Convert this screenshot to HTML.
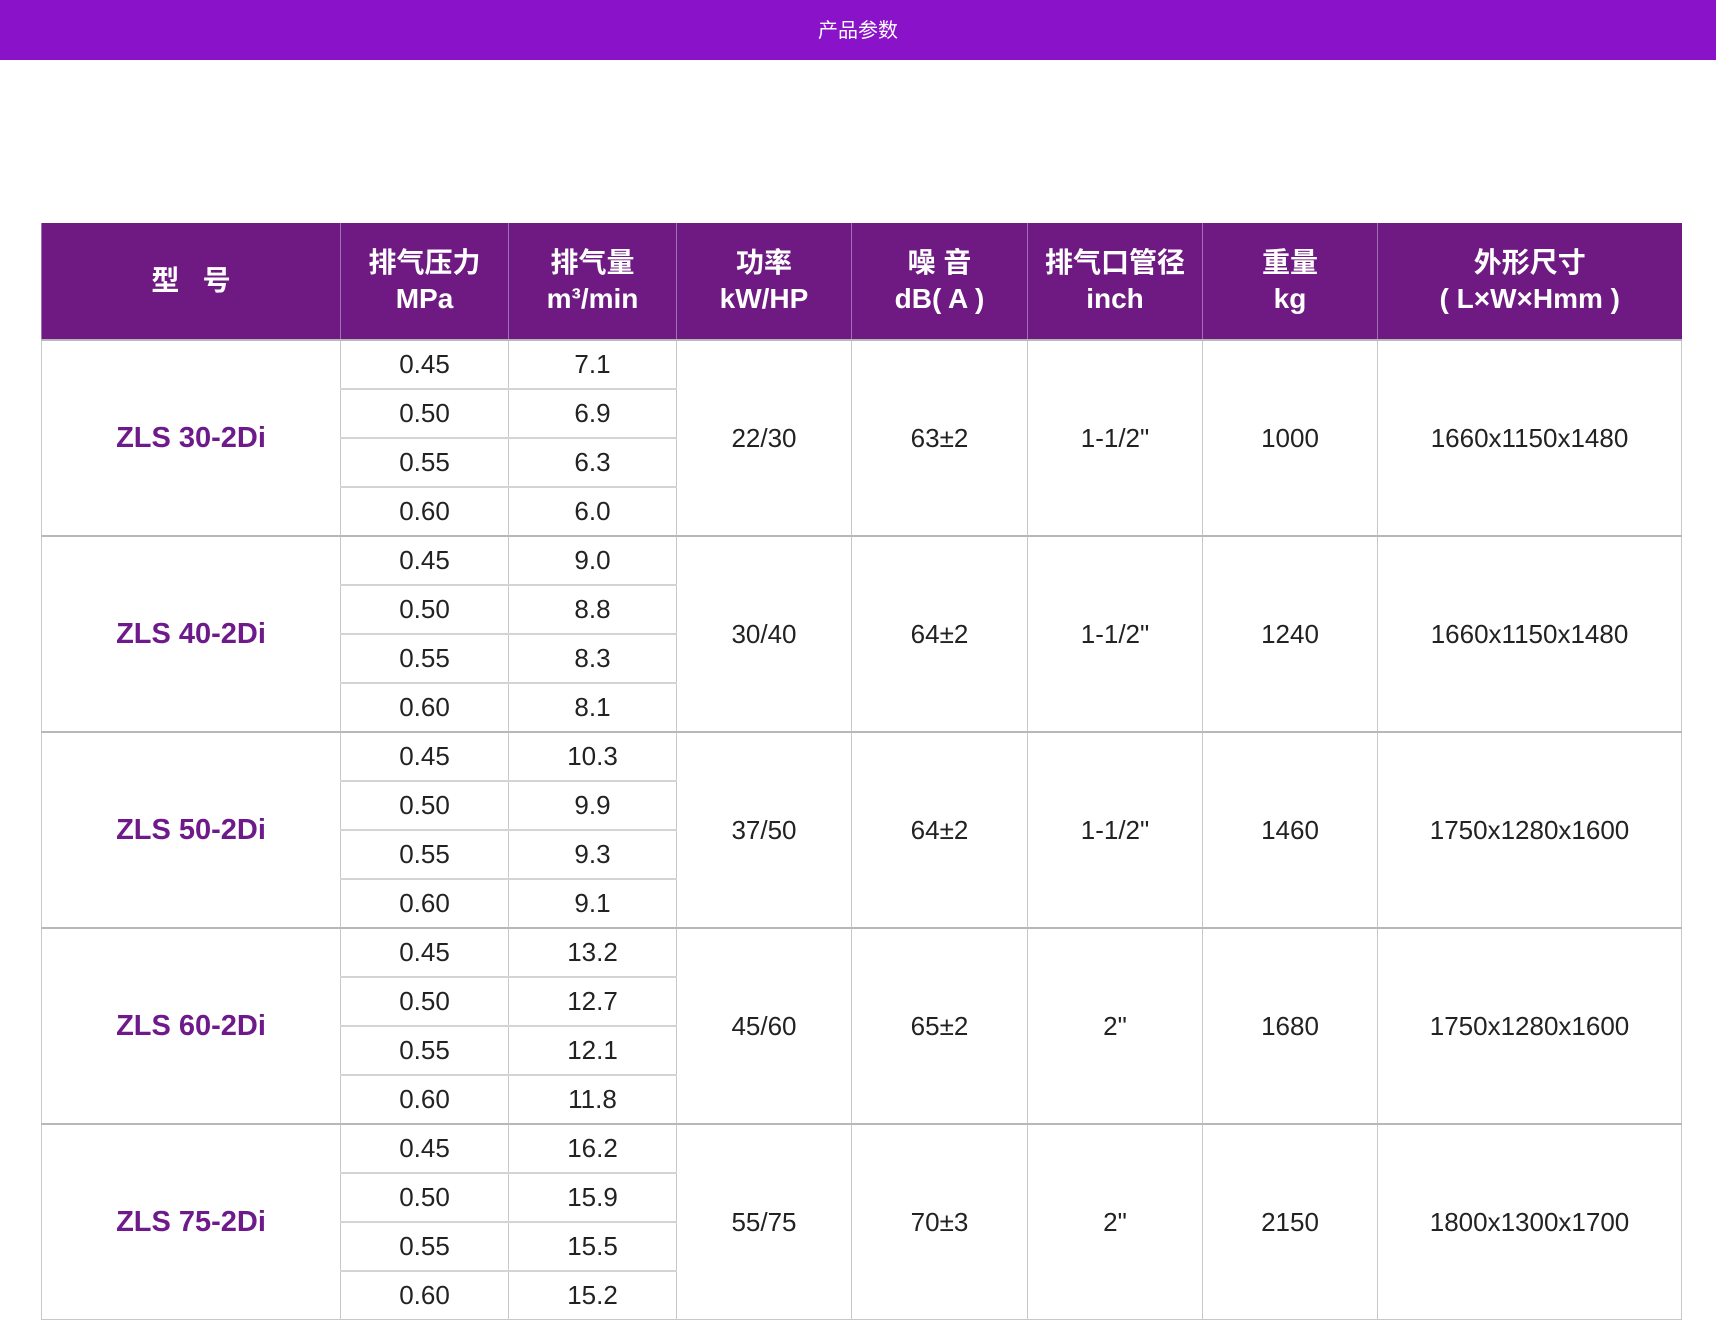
<!DOCTYPE html><html><head><meta charset="utf-8"><style>
body{margin:0;width:1716px;height:1303px;background:#fff;font-family:"Liberation Sans","Noto Sans CJK SC",sans-serif;overflow:hidden}
.top{height:60px;background:#8a12c8;color:#fff;text-align:center;line-height:62px;font-size:20px}
table{position:absolute;left:41px;top:223px;width:1640px;border-collapse:collapse;table-layout:fixed}
th{background:#6e1a82;color:#fff;font-weight:bold;font-size:28px;line-height:36px;height:116px;border-left:1px solid #a070b0;padding:0}
td{border:1px solid #c8c8c8;text-align:center;font-size:26px;color:#222;padding:0;height:47px}
td.m{color:#6e1a8a;font-weight:bold;font-size:29px}
tr.g td{border-top:2px solid #b8b8b8}
td.s{border-bottom:2px solid #d4d4d4}
</style></head><body>
<div class="top">产品参数</div>
<table>
<colgroup><col style="width:299px"><col style="width:168px"><col style="width:168px"><col style="width:175px"><col style="width:176px"><col style="width:175px"><col style="width:175px"><col style="width:304px"></colgroup>
<tr><th>型&nbsp;&nbsp;&nbsp;号</th><th>排气压力<br>MPa</th><th>排气量<br>m³/min</th><th>功率<br>kW/HP</th><th>噪 音<br>dB( A )</th><th>排气口管径<br>inch</th><th>重量<br>kg</th><th>外形尺寸<br>( L×W×Hmm )</th></tr>
<tr class="g"><td rowspan="4" class="m">ZLS 30-2Di</td><td class="s">0.45</td><td class="s">7.1</td><td rowspan="4">22/30</td><td rowspan="4">63±2</td><td rowspan="4">1-1/2"</td><td rowspan="4">1000</td><td rowspan="4">1660x1150x1480</td></tr>
<tr><td class="s">0.50</td><td class="s">6.9</td></tr><tr><td class="s">0.55</td><td class="s">6.3</td></tr><tr><td>0.60</td><td>6.0</td></tr>
<tr class="g"><td rowspan="4" class="m">ZLS 40-2Di</td><td class="s">0.45</td><td class="s">9.0</td><td rowspan="4">30/40</td><td rowspan="4">64±2</td><td rowspan="4">1-1/2"</td><td rowspan="4">1240</td><td rowspan="4">1660x1150x1480</td></tr>
<tr><td class="s">0.50</td><td class="s">8.8</td></tr><tr><td class="s">0.55</td><td class="s">8.3</td></tr><tr><td>0.60</td><td>8.1</td></tr>
<tr class="g"><td rowspan="4" class="m">ZLS 50-2Di</td><td class="s">0.45</td><td class="s">10.3</td><td rowspan="4">37/50</td><td rowspan="4">64±2</td><td rowspan="4">1-1/2"</td><td rowspan="4">1460</td><td rowspan="4">1750x1280x1600</td></tr>
<tr><td class="s">0.50</td><td class="s">9.9</td></tr><tr><td class="s">0.55</td><td class="s">9.3</td></tr><tr><td>0.60</td><td>9.1</td></tr>
<tr class="g"><td rowspan="4" class="m">ZLS 60-2Di</td><td class="s">0.45</td><td class="s">13.2</td><td rowspan="4">45/60</td><td rowspan="4">65±2</td><td rowspan="4">2"</td><td rowspan="4">1680</td><td rowspan="4">1750x1280x1600</td></tr>
<tr><td class="s">0.50</td><td class="s">12.7</td></tr><tr><td class="s">0.55</td><td class="s">12.1</td></tr><tr><td>0.60</td><td>11.8</td></tr>
<tr class="g"><td rowspan="4" class="m">ZLS 75-2Di</td><td class="s">0.45</td><td class="s">16.2</td><td rowspan="4">55/75</td><td rowspan="4">70±3</td><td rowspan="4">2"</td><td rowspan="4">2150</td><td rowspan="4">1800x1300x1700</td></tr>
<tr><td class="s">0.50</td><td class="s">15.9</td></tr><tr><td class="s">0.55</td><td class="s">15.5</td></tr><tr><td>0.60</td><td>15.2</td></tr>
</table>
</body></html>
